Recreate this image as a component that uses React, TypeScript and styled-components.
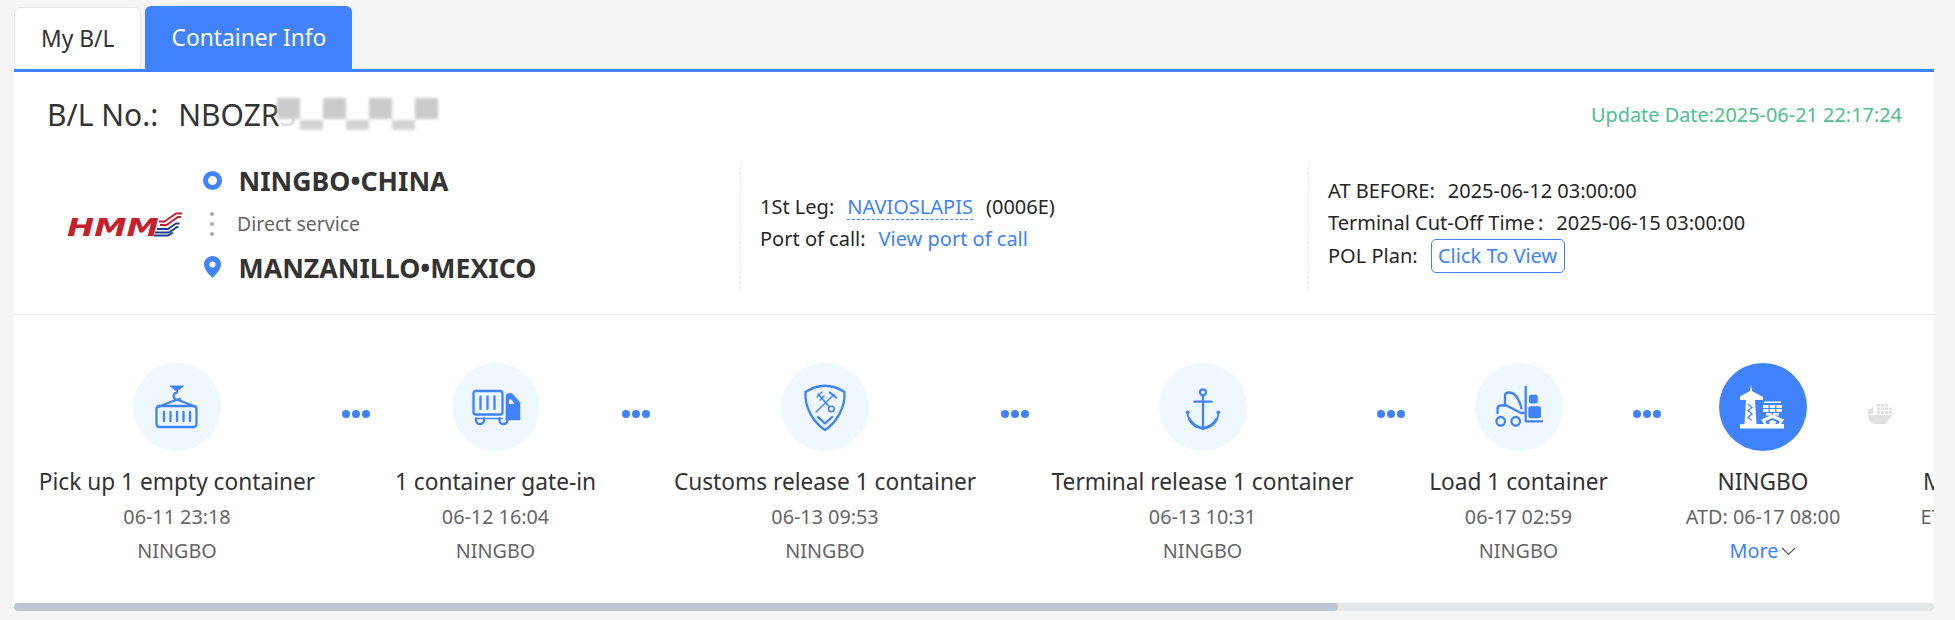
import React from "react";
import styled, { createGlobalStyle } from "styled-components";

const BLUE = "#4082ff";

const Global = createGlobalStyle`
  html, body { margin: 0; padding: 0; background: #f5f5f5; }
  body { font-family: "Noto Sans", "Open Sans", sans-serif; color: #333; }
  * { box-sizing: border-box; }
`;

const Page = styled.div`
  width: 1955px;
  height: 620px;
  padding: 6px 21px 0 14px;
  overflow: hidden;
`;

const Tabs = styled.div`
  display: flex;
  align-items: flex-end;
  gap: 4px;
  height: 63px;
`;

const Tab = styled.div<{ $active?: boolean }>`
  height: ${(p) => (p.$active ? 63 : 62)}px;
  padding: 0 26px;
  display: flex;
  align-items: center;
  font-size: 22.8px;
  border-radius: 6px 6px 0 0;
  background: ${(p) => (p.$active ? BLUE : "#fff")};
  color: ${(p) => (p.$active ? "#fff" : "#333")};
  border: ${(p) => (p.$active ? "none" : "1px solid #e8e8e8")};
  border-bottom: none;
`;

const Panel = styled.div`
  border-top: 3px solid ${BLUE};
  background: #fff;
  width: 1920px;
`;

const HeaderRow = styled.div`
  display: flex;
  align-items: center;
  justify-content: space-between;
  height: 84px;
  padding: 0 32px 0 33px;
`;

const BlTitle = styled.div`
  position: relative;
  display: flex;
  gap: 20px;
  font-size: 30px;
  color: #333;
  width: 400px;
`;

const FadedChar = styled.span`
  color: #dcdcdc;
`;

const Mosaic = styled.div`
  position: absolute;
  left: 230px;
  top: 4px;
  display: flex;
  filter: blur(1.4px);
`;

const MosaicCell = styled.span<{ $low: boolean }>`
  width: 23px;
  height: ${(p) => (p.$low ? 10 : 21)}px;
  margin-top: ${(p) => (p.$low ? 22 : 0)}px;
  background: ${(p) => (p.$low ? "#d4d4d4" : "#cbcbcb")};
`;

const UpdateDate = styled.div`
  font-size: 19.9px;
  color: #4fc08d;
`;

const InfoRow = styled.div`
  display: grid;
  grid-template-columns: 726px 568px 1fr;
  height: 123px;
  margin-top: 6px;
  margin-bottom: 29px;
`;

const RouteCol = styled.div`
  display: flex;
  align-items: center;
  padding: 0 0 4px 53px;
`;

const LogoBox = styled.div`
  width: 136px;
  display: flex;
  align-items: center;
`;

const Route = styled.div`
  display: flex;
  flex-direction: column;
`;

const Stop = styled.div`
  display: flex;
  align-items: center;
  height: 36px;
  font-size: 26.7px;
  font-weight: 700;
  color: #333;
  gap: 16.5px;
`;

const StopIcon = styled.span`
  width: 19px;
  display: flex;
  justify-content: center;
`;

const Ring = styled.span`
  width: 19px;
  height: 19px;
  border: 5px solid ${BLUE};
  border-radius: 50%;
`;

const Via = styled.div`
  display: flex;
  align-items: center;
  gap: 23px;
  height: 51px;
  font-size: 19.5px;
  color: #666;
  padding-left: 7px;
`;

const ViaDots = styled.span`
  display: flex;
  flex-direction: column;
  gap: 6px;
`;

const ViaDot = styled.i`
  width: 4px;
  height: 4px;
  border-radius: 50%;
  background: #aaa;
  display: block;
`;

const InfoCol = styled.div<{ $lift: number }>`
  border-left: 1px dashed #e8e8e8;
  padding: 0 0 ${(p) => p.$lift}px 19px;
  display: flex;
  flex-direction: column;
  justify-content: center;
  font-size: 20px;
  line-height: 32px;
  color: #262626;
`;

const InfoLine = styled.div`
  display: flex;
  align-items: center;
  gap: 13px;
  white-space: nowrap;
`;

const Link = styled.span<{ $dotted?: boolean }>`
  color: ${BLUE};
  line-height: 24px;
  border-bottom: ${(p) => (p.$dotted ? `1px dashed ${BLUE}` : "none")};
`;

const ViewButton = styled.span`
  color: ${BLUE};
  border: 1px solid ${BLUE};
  border-radius: 5px;
  height: 34px;
  width: 134px;
  display: flex;
  align-items: center;
  justify-content: center;
`;

const TimelineScroll = styled.div`
  border-top: 1px solid #ebebeb;
  width: 1920px;
  overflow: hidden;
`;

const Track = styled.div`
  display: flex;
  align-items: flex-start;
  width: 2784px;
  height: 288px;
  padding: 48px 0 0 23px;
`;

const ScrollBar = styled.div`
  width: 1920px;
  height: 8px;
  border-radius: 4px;
  background: #e6e7e9;
`;

const ScrollThumb = styled.div`
  width: 1324px;
  height: 8px;
  border-radius: 4px;
  background: #bcc6d2;
`;

const Step = styled.div<{ $w: number }>`
  flex: none;
  width: ${(p) => p.$w}px;
  display: flex;
  flex-direction: column;
  align-items: center;
  white-space: nowrap;
`;

const Circle = styled.div<{ $current?: boolean }>`
  width: 88px;
  height: 88px;
  border-radius: 50%;
  background: ${(p) => (p.$current ? BLUE : "#eff7ff")};
  color: ${(p) => (p.$current ? "#fff" : BLUE)};
  display: flex;
  align-items: center;
  justify-content: center;
`;

const StepLabel = styled.div`
  margin-top: 15px;
  font-size: 22.7px;
  line-height: 32px;
  color: #333;
`;

const StepMeta = styled.div`
  margin-top: 4px;
  font-size: 19.8px;
  line-height: 30px;
  color: #666;
`;

const More = styled.div`
  margin-top: 4px;
  font-size: 19.8px;
  line-height: 30px;
  color: ${BLUE};
  display: flex;
  align-items: center;
  gap: 3px;
`;

const Connector = styled.div`
  flex: none;
  width: 28px;
  margin: 47px 24.5px 0;
  height: 8px;
  display: flex;
  justify-content: space-between;
`;

const Dot = styled.i`
  width: 8px;
  height: 8px;
  border-radius: 50%;
  background: ${BLUE};
  display: block;
`;

const ShipConnector = styled.div`
  flex: none;
  width: 28px;
  margin: 41px 24.5px 0;
  display: flex;
  justify-content: center;
  color: #e0e0e0;
`;

const Ico: React.FC<{ children: React.ReactNode }> = ({ children }) => (
  <svg width="60" height="60" viewBox="0 0 60 60" fill="none" stroke="currentColor" strokeWidth="2.3" strokeLinecap="round" strokeLinejoin="round">
    {children}
  </svg>
);

const ContainerIcon = () => (
  <Ico>
    <path d="M23.5 9h13L30 14z" fill="currentColor" strokeWidth="1" />
    <path d="M30 14v1.500c-3 .5-4 3-3 5s4 3 6 1.500" />
    <path d="M30 22.500L11 30M30 22.500L49 30" strokeWidth="2" />
    <rect x="9.500" y="29" width="40" height="21" rx="3" />
    <path d="M17 35v9M23.500 35v9M30 35v9M36.500 35v9M43 35v9" />
  </Ico>
);

const TruckIcon = () => (
  <Ico>
    <rect x="7.500" y="14" width="29" height="23.500" rx="2.500" />
    <path d="M14.500 19.500v12.500M21.500 19.500v12.500M28.500 19.500v12.500" />
    <path d="M40 19q0-2.500 2.500-2.500h3.500l8 9V43H40z" fill="currentColor" strokeWidth="0.5" />
    <path d="M43 22.500h2.500l3 4.500H43z" fill="#eff7ff" stroke="none" />
    <path d="M10 41.500v1.500a4 4 0 0 0 8 0v-1.500M33.500 41.500v1.500a4 4 0 0 0 8 0v-1.500" />
    <path d="M10 41.500h26" strokeWidth="1.500" />
  </Ico>
);

const ShieldIcon = () => (
  <Ico>
    <path d="M10.500 15Q30 2.500 49.500 15C50.500 31 41 46 30 53C19 46 9.500 31 10.500 15z" />
    <path d="M23 40l7 6.500L37 40" />
    <circle cx="36.300" cy="32" r="2.800" strokeWidth="1.600" />
    <path d="M23 17l11.500 13" strokeWidth="1.600" />
    <path d="M22 20l5-5M25 23l4-4" strokeWidth="1.400" />
    <path d="M39 17.500L21 35" strokeWidth="1.300" />
    <path d="M35 15.500l6 5" strokeWidth="2.200" />
  </Ico>
);

const AnchorIcon = () => (
  <Ico>
    <circle cx="30" cy="15.300" r="3" />
    <path d="M30 18.500V52M21.500 24.700h17" />
    <path d="M14.700 36c0 9 7 15 15.300 15.500c8.300-.5 15.300-6.500 15.300-15.500" strokeWidth="1.800" />
    <path d="M16.500 42c3 6 8 8 13.500 9.500c5.500-1.500 10.500-3.500 13.500-9.500" strokeWidth="2.600" />
    <circle cx="14.700" cy="35.300" r="1.900" fill="currentColor" stroke="none" />
    <circle cx="45.300" cy="35.300" r="1.900" fill="currentColor" stroke="none" />
  </Ico>
);

const ForkliftIcon = () => (
  <Ico>
    <path d="M36.700 10v34.300H53" />
    <rect x="40" y="17.700" width="8.700" height="8.700" rx="2" fill="currentColor" stroke="none" />
    <rect x="39.300" y="29.300" width="12.700" height="12" rx="2.500" fill="currentColor" stroke="none" />
    <circle cx="11.700" cy="44.300" r="4.300" />
    <circle cx="26.700" cy="44.300" r="4.300" />
    <path d="M8.500 36v-4q0-3.500 3.500-3.500h5.500L32 36h3" />
    <path d="M16 27v-8q0-3.500 4-3.500c6 0 10 6 12.500 16" />
  </Ico>
);

const PortIcon = () => (
  <svg width="60" height="60" viewBox="0 0 60 60" fill="#fff">
    <rect x="7" y="47" width="44" height="4.500" rx="0.500" />
    <path d="M18 7.500l1 6.500 11 6v3H7v-3.500l10-5.500z" />
    <path d="M13 23h9l1.500 24h-12z" />
    <path d="M15 27l4 3.500-4 3 4 3.500-4 3.500 4 3" stroke={BLUE} strokeWidth="1.300" fill="none" />
    <rect x="31" y="24.500" width="17" height="1.500" />
    <g>
      <rect x="30" y="28" width="5.500" height="3" />
      <rect x="36.700" y="28" width="5.500" height="3" />
      <rect x="43.400" y="28" width="5.500" height="3" />
      <rect x="30" y="32" width="5.500" height="3" />
      <rect x="36.700" y="32" width="5.500" height="3" />
      <rect x="43.400" y="32" width="5.500" height="3" />
      <rect x="33" y="36" width="5.500" height="2.500" />
      <rect x="40.400" y="36" width="5.500" height="2.500" />
    </g>
    <path d="M39.500 37.500L51 42.500 48 47H31l-3-4.500z" />
    <path d="M39.500 41l-7 3 1 3h12l1-3z" fill={BLUE} />
    <path d="M39.500 43l-3.500 1.500.5 2.500h6l.5-2.500z" fill="#fff" />
  </svg>
);

const ShipIcon = () => (
  <svg width="24" height="20" viewBox="0 0 24 20" fill="currentColor">
    <path d="M0 11h24l-6 9H5q-5-3-5-9z" />
    <path d="M0 10V6q0-1 1-1h2l1-2h1v7z" />
    <g>
      <rect x="9" y="0" width="3" height="2.500" />
      <rect x="13" y="0" width="3" height="2.500" />
      <rect x="17" y="0" width="3" height="2.500" />
      <rect x="9" y="3.500" width="3" height="2.500" />
      <rect x="13" y="3.500" width="3" height="2.500" />
      <rect x="17" y="3.500" width="3" height="2.500" />
      <rect x="21" y="3.500" width="3" height="2.500" />
      <rect x="9" y="7" width="3" height="3" />
      <rect x="13" y="7" width="3" height="3" />
      <rect x="17" y="7" width="3" height="3" />
      <rect x="21" y="7" width="3" height="3" />
    </g>
  </svg>
);

const PinIcon = () => (
  <svg width="17" height="22" viewBox="0 0 17 22" fill={BLUE}>
    <path fillRule="evenodd" d="M8.500 0C3.800 0 0 3.700 0 8.300 0 13.500 5 18.500 8.500 22 12 18.500 17 13.500 17 8.300 17 3.700 13.200 0 8.500 0zm0 5.500a3 3 0 1 1 0 6 3 3 0 0 1 0-6z" />
  </svg>
);

const HmmLogo = () => (
  <svg width="116" height="36" viewBox="0 -6 116 36">
    <text x="0" y="23.700" fill="#c8202a" fontFamily="DejaVu Sans, sans-serif" fontWeight="700" fontStyle="italic" fontSize="24" textLength="92" lengthAdjust="spacingAndGlyphs">HMM</text>
    <g fill="none" strokeWidth="1.800">
      <path d="M92 9.500h5.500L109 1.500h6" stroke="#c8202a" />
      <path d="M93 13h6.500L111 5h3" stroke="#c8202a" />
      <path d="M90 17h11l8-5.500h3.500" stroke="#1f3f8f" />
      <path d="M88 20.500h14L110 15h1.500" stroke="#1f3f8f" />
      <path d="M87 23.500h14l5-3" stroke="#1f3f8f" />
    </g>
  </svg>
);

const ChevronDown = () => (
  <svg width="15" height="9" viewBox="0 0 15 9" fill="none" stroke="#555" strokeWidth="1.200">
    <path d="M1 1l6.500 6.500L14 1" />
  </svg>
);

type StepData = { w: number; icon: React.ReactNode; label: string; date: string; place?: string; current?: boolean };

const steps: StepData[] = [
  { w: 280, icon: <ContainerIcon />, label: "Pick up 1 empty container", date: "06-11 23:18", place: "NINGBO" },
  { w: 203, icon: <TruckIcon />, label: "1 container gate-in", date: "06-12 16:04", place: "NINGBO" },
  { w: 302, icon: <ShieldIcon />, label: "Customs release 1 container", date: "06-13 09:53", place: "NINGBO" },
  { w: 299, icon: <AnchorIcon />, label: "Terminal release 1 container", date: "06-13 10:31", place: "NINGBO" },
  { w: 179, icon: <ForkliftIcon />, label: "Load 1 container", date: "06-17 02:59", place: "NINGBO" },
  { w: 156, icon: <PortIcon />, label: "NINGBO", date: "ATD: 06-17 08:00", current: true },
];

const mosaic = [false, true, false, true, false, true, false];

export default function App() {
  return (
    <Page>
      <Global />
      <Tabs>
        <Tab>My B/L</Tab>
        <Tab $active>Container Info</Tab>
      </Tabs>
      <Panel>
        <HeaderRow>
          <BlTitle>
            <span>B/L No.:</span>
            <span>NBOZR<FadedChar>S</FadedChar></span>
            <Mosaic>
              {mosaic.map((low, i) => (
                <MosaicCell key={i} $low={low} />
              ))}
            </Mosaic>
          </BlTitle>
          <UpdateDate>Update Date:2025-06-21 22:17:24</UpdateDate>
        </HeaderRow>
        <InfoRow>
          <RouteCol>
            <LogoBox>
              <HmmLogo />
            </LogoBox>
            <Route>
              <Stop>
                <StopIcon><Ring /></StopIcon>
                NINGBO•CHINA
              </Stop>
              <Via>
                <ViaDots><ViaDot /><ViaDot /><ViaDot /></ViaDots>
                Direct service
              </Via>
              <Stop>
                <StopIcon><PinIcon /></StopIcon>
                MANZANILLO•MEXICO
              </Stop>
            </Route>
          </RouteCol>
          <InfoCol $lift={5}>
            <InfoLine>
              <span>1St Leg:</span>
              <Link $dotted>NAVIOSLAPIS</Link>
              <span>(0006E)</span>
            </InfoLine>
            <InfoLine>
              <span>Port of call:</span>
              <Link>View port of call</Link>
            </InfoLine>
          </InfoCol>
          <InfoCol $lift={4}>
            <InfoLine>
              <span>AT BEFORE:</span>
              <span>2025-06-12 03:00:00</span>
            </InfoLine>
            <InfoLine>
              <span>Terminal Cut-Off Time{"\u2009"}:</span>
              <span>2025-06-15 03:00:00</span>
            </InfoLine>
            <InfoLine>
              <span>POL Plan:</span>
              <ViewButton>Click To View</ViewButton>
            </InfoLine>
          </InfoCol>
        </InfoRow>
        <TimelineScroll>
          <Track>
            {steps.map((s, i) => (
              <React.Fragment key={s.label}>
                <Step $w={s.w}>
                  <Circle $current={s.current}>{s.icon}</Circle>
                  <StepLabel>{s.label}</StepLabel>
                  <StepMeta>{s.date}</StepMeta>
                  {s.place ? (
                    <StepMeta>{s.place}</StepMeta>
                  ) : (
                    <More>More<ChevronDown /></More>
                  )}
                </Step>
                {i < steps.length - 1 ? (
                  <Connector><Dot /><Dot /><Dot /></Connector>
                ) : (
                  <ShipConnector><ShipIcon /></ShipConnector>
                )}
              </React.Fragment>
            ))}
            <Step $w={156}>
              <Circle />
              <StepLabel>MANZANILLO</StepLabel>
              <StepMeta>ETA: 07-10 08:00</StepMeta>
            </Step>
          </Track>
        </TimelineScroll>
        <ScrollBar>
          <ScrollThumb />
        </ScrollBar>
      </Panel>
    </Page>
  );
}
